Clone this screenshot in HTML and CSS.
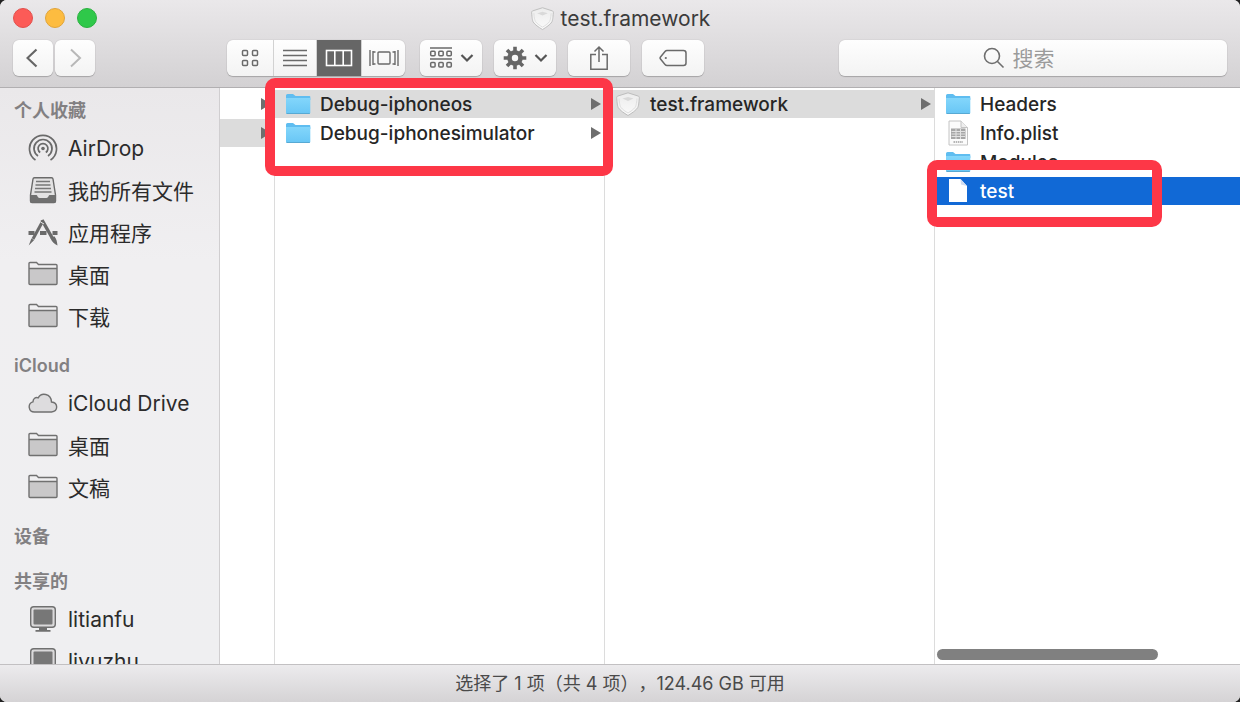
FILE: index.html
```html
<!DOCTYPE html>
<html lang="zh-CN">
<head>
    <meta charset="UTF-8">
    <meta name="viewport" content="width=device-width, initial-scale=1.0">
    <title>test.framework</title>
    <link rel="stylesheet" href="styles.css">
</head>
<body>
    <!-- shared icons -->
    <svg class="defs" aria-hidden="true">
        <defs>
            <linearGradient id="blueFill" x1="0" y1="0" x2="0" y2="1">
                <stop offset="0" stop-color="#83d6fb"/>
                <stop offset="1" stop-color="#68c6f5"/>
            </linearGradient>
            <linearGradient id="shieldFill" x1="0" y1="0" x2="0" y2="1">
                <stop offset="0" stop-color="#ececec"/>
                <stop offset="1" stop-color="#fafafa"/>
            </linearGradient>
        </defs>
        <symbol id="folder-line" viewBox="0 0 30 26">
            <path d="M1 8h28v14.500a1 1 0 0 1-1 1H2a1 1 0 0 1-1-1z" fill="#c9c8c9"/>
            <path d="M1 22.500v-20a1 1 0 0 1 1-1h6.500l2 2H28a1 1 0 0 1 1 1v18a1 1 0 0 1-1 1H2a1 1 0 0 1-1-1zM1 7.500h28" fill="none" stroke="#707070" stroke-width="1.400"/>
        </symbol>
        <symbol id="folder-blue" viewBox="0 0 26 22">
            <path d="M1 2.500A1.500 1.500 0 0 1 2.500 1H8l2.500 2h14a.8.8 0 0 1 .8.8V7H1z" fill="#5fbdf0"/>
            <path d="M1 5h24.300v14.800a1 1 0 0 1-1 1H2a1 1 0 0 1-1-1z" fill="url(#blueFill)"/>
            <path d="M1.500 20.500h23.300" stroke="#57a9d3" stroke-width="1"/>
        </symbol>
        <symbol id="shield" viewBox="0 0 26 26">
            <path d="M13 1.800L23 5c1 .3 1.500 1 1.300 2.200-.5 5.500-.6 7-1.500 9.300C21 19.500 17 22 13 24.500 9 22 5 19.500 3.200 16.500 2.300 14.200 2.200 12.700 1.700 7.200 1.500 6 2 5.300 3 5z" fill="url(#shieldFill)" stroke="#bdbdbd" stroke-width="1"/>
            <path d="M4 7.500C4.500 13 5 15 6 16.500c1.500 2 4.500 4 7 5.500 2.500-1.500 5.500-3.500 7-5.500 1-1.500 1.500-3.500 2-9" fill="none" stroke="#dedede" stroke-width="1"/>
            <path d="M7.500 7.500L13 6l5.500 1.500L13 10z" fill="#d9d9d9"/>
        </symbol>
        <symbol id="display" viewBox="0 0 30 30">
            <rect x="2.700" y="2.700" width="24.600" height="20.600" rx="3" fill="#dad9da" stroke="#707070" stroke-width="1.400"/>
            <rect x="5.500" y="5.500" width="19" height="15" rx="1" fill="#777"/>
            <path d="M11 24h8v2h3.500v1.800h-15V26H11z" fill="#707070"/>
        </symbol>
        <symbol id="chevron" viewBox="0 0 14 10">
            <path d="M1.500 2l5.500 5.500L12.500 2" fill="none" stroke="#555" stroke-width="2.200"/>
        </symbol>
    </svg>

    <div class="window">
        <header class="header">
            <div class="titlebar">
                <div class="lights">
                    <button class="light close" aria-label="关闭"></button>
                    <button class="light minimize" aria-label="最小化"></button>
                    <button class="light zoom" aria-label="缩放"></button>
                </div>
                <h1 class="title">
                    <svg class="title-icon"><use href="#shield"/></svg>
                    test.framework
                </h1>
            </div>

            <div class="toolbar">
                <div class="nav">
                    <button class="btn" aria-label="后退">
                        <svg width="14" height="20" viewBox="0 0 14 20"><path d="M10.500 1.500L1.500 10l9 8.500" fill="none" stroke="#666" stroke-width="2.200"/></svg>
                    </button>
                    <button class="btn" aria-label="前进">
                        <svg width="14" height="20" viewBox="0 0 14 20"><path d="M3 1.500L12 10l-9 8.500" fill="none" stroke="#b8b8b8" stroke-width="2"/></svg>
                    </button>
                </div>

                <div class="views">
                    <button class="view" aria-label="图标">
                        <svg width="18" height="18" viewBox="0 0 18 18" fill="none" stroke="#6a6a6a" stroke-width="1.500">
                            <rect x="1.500" y="1.500" width="5" height="5" rx="1"/><rect x="11.500" y="1.500" width="5" height="5" rx="1"/>
                            <rect x="1.500" y="11.500" width="5" height="5" rx="1"/><rect x="11.500" y="11.500" width="5" height="5" rx="1"/>
                        </svg>
                    </button>
                    <button class="view" aria-label="列表">
                        <svg width="24" height="18" viewBox="0 0 24 18"><path d="M0 1.500h24M0 6.500h24M0 11.500h24M0 16.500h24" stroke="#6a6a6a" stroke-width="1.500"/></svg>
                    </button>
                    <button class="view active" aria-label="分栏">
                        <svg width="28" height="18" viewBox="0 0 28 18" fill="none" stroke="#fff" stroke-width="1.600">
                            <rect x="1.500" y="1.500" width="25" height="15"/><path d="M9.800 1.500v15M18.200 1.500v15"/>
                        </svg>
                    </button>
                    <button class="view" aria-label="Cover Flow">
                        <svg width="30" height="18" viewBox="0 0 30 18" fill="none" stroke="#6a6a6a" stroke-width="1.400">
                            <rect x="9" y="3" width="12" height="12" rx="1"/>
                            <path d="M1 1v16M29 1v16M4 2v14M26 2v14M4 3h2.500M4 15h2.500M26 3h-2.500M26 15h-2.500"/>
                        </svg>
                    </button>
                </div>

                <div class="tools">
                    <button class="btn tool" aria-label="排列">
                        <svg width="24" height="24" viewBox="0 0 24 24" fill="none" stroke="#6a6a6a" stroke-width="1.500">
                            <path d="M1 2h22M1 13h22"/>
                            <rect x="1.700" y="5.300" width="4.400" height="4.400" rx="1"/><rect x="9.800" y="5.300" width="4.400" height="4.400" rx="1"/><rect x="17.900" y="5.300" width="4.400" height="4.400" rx="1"/>
                            <rect x="1.700" y="16.500" width="4.400" height="4.400" rx="1"/><rect x="9.800" y="16.500" width="4.400" height="4.400" rx="1"/><rect x="17.900" y="16.500" width="4.400" height="4.400" rx="1"/>
                        </svg>
                        <svg class="chevron"><use href="#chevron"/></svg>
                    </button>
                    <button class="btn tool" aria-label="操作">
                        <svg width="24" height="24" viewBox="-12 -12 24 24">
                            <circle r="5.500" fill="none" stroke="#666" stroke-width="4.600"/>
                            <g stroke="#666" stroke-width="3.600">
                                <path d="M0-7v-4.300M0 7v4.300M-7 0h-4.300M7 0h4.300"/>
                                <path d="M0-7v-4.300M0 7v4.300M-7 0h-4.300M7 0h4.300" transform="rotate(45)"/>
                            </g>
                        </svg>
                        <svg class="chevron"><use href="#chevron"/></svg>
                    </button>
                    <button class="btn tool" aria-label="共享">
                        <svg width="20" height="26" viewBox="0 0 20 26" fill="none" stroke="#6a6a6a" stroke-width="1.500">
                            <path d="M7 9.500H1.800v14.700h16.400V9.500H13M10 17V2M5.500 6.500L10 2l4.500 4.500"/>
                        </svg>
                    </button>
                    <button class="btn tool" aria-label="标记">
                        <svg width="28" height="18" viewBox="0 0 28 18" fill="none" stroke="#6a6a6a" stroke-width="1.500">
                            <path d="M8 1.500h16.500a2.500 2.500 0 0 1 2.500 2.500v10a2.500 2.500 0 0 1-2.500 2.500H8c-1 0-1.500-.4-2-1L1.500 10c-.5-.6-.5-1.400 0-2L6 2.500c.5-.6 1-1 2-1z"/>
                            <circle cx="6.800" cy="9" r="1.100" fill="#6a6a6a" stroke="none"/>
                        </svg>
                    </button>
                </div>

                <label class="search">
                    <svg width="22" height="22" viewBox="0 0 22 22" fill="none" stroke="#6e6e6e" stroke-width="1.600"><circle cx="9" cy="9" r="7.500"/><path d="M14.500 14.500l6 6"/></svg>
                    <input type="text" placeholder="搜索" aria-label="搜索">
                </label>
            </div>
        </header>

        <main class="main">
            <nav class="sidebar">
                <section class="group">
                    <h2>个人收藏</h2>
                    <a class="place" href="#">
                        <svg viewBox="0 0 30 30" fill="none" stroke="#6a6a6a" stroke-width="1.700">
                            <circle cx="15" cy="15.500" r="1.800" fill="#6a6a6a" stroke="none"/>
                            <path d="M12.200 19.500a4.900 4.900 0 1 1 5.600 0"/>
                            <path d="M10 23a9 9 0 1 1 10 0"/>
                            <path d="M7.500 27a13.500 13.500 0 1 1 15 0"/>
                        </svg>
                        AirDrop
                    </a>
                    <a class="place" href="#">
                        <svg viewBox="0 0 30 30">
                            <path d="M6.500 2.700h17a1.500 1.500 0 0 1 1.500 1.300l2.500 16v6a1.500 1.500 0 0 1-1.500 1.500H4A1.500 1.500 0 0 1 2.500 26v-6L5 4a1.500 1.500 0 0 1 1.500-1.300z" fill="#e3e2e3" stroke="#6a6a6a" stroke-width="1.400"/>
                            <path d="M8 6.500h14M7.500 10h15M7 13.500h16M6.500 17h17" stroke="#777" stroke-width="1.500"/>
                            <path d="M2.500 20h6c1 0 1 3 3 3h7c2 0 2-3 3-3h6v7.500h-25z" fill="#707070"/>
                        </svg>
                        我的所有文件
                    </a>
                    <a class="place" href="#">
                        <svg viewBox="0 0 30 30" fill="none" stroke="#6a6a6a">
                            <path d="M.5 16h6M12 16h6.500M24.500 16h5" stroke-width="4"/>
                            <path d="M14.800 4L5 22" stroke-width="3"/>
                            <path d="M14 3l10.500 18.500" stroke-width="3.400"/>
                            <path d="M12.500 5l3.500 2" stroke="#ebeaeb" stroke-width="1"/>
                            <path d="M3.400 21.500l2.800 1.500-5.500 5.500zM22.500 21.500l3.800-2.200c2.200 2.500 2.700 5.200 3.200 9.200-3-1.500-5.500-3.500-7-7z" fill="#6a6a6a" stroke="none"/>
                        </svg>
                        应用程序
                    </a>
                    <a class="place" href="#"><svg viewBox="0 0 30 26"><use href="#folder-line"/></svg>桌面</a>
                    <a class="place" href="#"><svg viewBox="0 0 30 26"><use href="#folder-line"/></svg>下载</a>
                </section>

                <section class="group">
                    <h2>iCloud</h2>
                    <a class="place" href="#">
                        <svg viewBox="0 0 30 30"><path d="M6.500 24A5.200 5.200 0 0 1 5 13.800c0-3.300 2.500-4.800 5.200-4 3-5.500 12.800-4.600 13.300 4.200 7 .8 6.800 9.500 0 10z" fill="#dddcde" stroke="#707070" stroke-width="1.400"/></svg>
                        iCloud Drive
                    </a>
                    <a class="place" href="#"><svg viewBox="0 0 30 26"><use href="#folder-line"/></svg>桌面</a>
                    <a class="place" href="#"><svg viewBox="0 0 30 26"><use href="#folder-line"/></svg>文稿</a>
                </section>

                <section class="group">
                    <h2>设备</h2>
                </section>

                <section class="group">
                    <h2>共享的</h2>
                    <a class="place" href="#"><svg><use href="#display"/></svg>litianfu</a>
                    <a class="place" href="#"><svg><use href="#display"/></svg>liyuzhu</a>
                </section>
            </nav>

            <div class="browser">
                <ul class="column narrow">
                    <li><a class="file parent" href="#" aria-label="文件夹"></a></li>
                    <li><a class="file parent selected" href="#" aria-label="文件夹"></a></li>
                </ul>
                <ul class="column">
                    <li><a class="file parent selected" href="#"><svg><use href="#folder-blue"/></svg>Debug-iphoneos</a></li>
                    <li><a class="file parent" href="#"><svg><use href="#folder-blue"/></svg>Debug-iphonesimulator</a></li>
                </ul>
                <ul class="column">
                    <li><a class="file parent selected" href="#"><svg><use href="#shield"/></svg>test.framework</a></li>
                </ul>
                <ul class="column last">
                    <li><a class="file" href="#"><svg><use href="#folder-blue"/></svg>Headers</a></li>
                    <li>
                        <a class="file" href="#">
                            <svg viewBox="0 0 26 26">
                                <path d="M4 1h12l6.500 6.500V25H4z" fill="#fbfbfb" stroke="#c4c4c4" stroke-width="1"/>
                                <path d="M16 1v6.500h6.500" fill="#eee" stroke="#c4c4c4" stroke-width="1"/>
                                <rect x="6" y="8.500" width="14.500" height="10.500" fill="#a6a6a6"/>
                                <path d="M6.500 11.500h13.500M6.500 14h13.500M6.500 16.500h13.500M11 9v10M15.500 9v10" stroke="#e2e2e2" stroke-width="1"/>
                                <path d="M8.500 22h9.500" stroke="#b5b5b5" stroke-width="2" stroke-dasharray="1.500 .7"/>
                            </svg>
                            Info.plist
                        </a>
                    </li>
                    <li><a class="file" href="#"><svg><use href="#folder-blue"/></svg>Modules</a></li>
                    <li>
                        <a class="file current" href="#">
                            <svg viewBox="0 0 26 26"><path d="M4 1h11.500l6.500 7v16H4z" fill="#fff"/><path d="M15.500 1l6.500 7-6-1.500z" fill="#cfdcf0"/></svg>
                            test
                        </a>
                    </li>
                </ul>
                <div class="scrollbar"></div>
                <div class="mark mark-builds"></div>
                <div class="mark mark-binary"></div>
            </div>
        </main>

        <footer class="status">选择了 1 项（共 4 项），124.46 GB 可用</footer>
    </div>
</body>
</html>
```

FILE: styles.css
```css
* {
    box-sizing: border-box;
}

body {
    margin: 0;
    background: #222;
    font-family: Inter, "Noto Sans CJK SC", sans-serif;
    color: #2b2b2b;
}

h1, h2, ul {
    margin: 0;
    padding: 0;
}

a {
    color: inherit;
    text-decoration: none;
}

button {
    padding: 0;
    border: none;
    font: inherit;
}

.defs {
    position: absolute;
    width: 0;
    height: 0;
}

.window {
    display: flex;
    flex-direction: column;
    height: 100vh;
    border-radius: 7px;
    overflow: hidden;
    background: white;
}

/* Title bar and toolbar */
.header {
    padding: 0 13px 11px;
    background: linear-gradient(#eae8ea, #d3d1d3);
    border-bottom: 1px solid #b1afb1;
}

.titlebar {
    display: grid;
    grid-template-columns: 1fr auto 1fr;
    align-items: center;
    height: 36px;
    margin-bottom: 4px;
}

.lights {
    display: flex;
    gap: 12px;
}

.light {
    width: 20px;
    height: 20px;
    border-radius: 50%;
}

.close {
    background: #fc5b57;
    border: 1px solid #e2504c;
}

.minimize {
    background: #fdbc40;
    border: 1px solid #e0a43a;
}

.zoom {
    background: #2fc84a;
    border: 1px solid #2bb140;
}

.title {
    display: flex;
    align-items: center;
    gap: 6px;
    font-size: 21px;
    font-weight: 400;
    color: #3b3b3b;
}

.title-icon {
    width: 25px;
    height: 25px;
}

.toolbar {
    display: flex;
    align-items: center;
}

.nav {
    display: flex;
    gap: 2px;
    margin-right: 132px;
}

.btn,
.views,
.search {
    height: 36px;
    background: linear-gradient(#fefefe, #f3f3f3);
    border-radius: 6px;
    box-shadow: 0 0 1px rgba(0,0,0,0.3), 0 1px 1px rgba(0,0,0,0.2);
}

.btn {
    display: flex;
    align-items: center;
    justify-content: center;
    width: 40px;
}

.views {
    display: grid;
    grid-template-columns: 47px 43px 45px 1fr;
    width: 178px;
    margin-right: 15px;
    overflow: hidden;
}

.view {
    display: flex;
    align-items: center;
    justify-content: center;
    background: none;
    border-right: 1px solid #d2d2d2;
}

.view:last-child {
    border-right: none;
}

.view.active {
    background: #666;
}

.tools {
    display: flex;
    gap: 12px;
}

.tool {
    gap: 7px;
    width: 62px;
}

.chevron {
    width: 14px;
    height: 10px;
}

.search {
    display: flex;
    align-items: center;
    gap: 8px;
    width: 32%;
    margin-left: auto;
    padding-left: 144px;
}

.search input {
    flex: 1;
    min-width: 0;
    padding: 0;
    border: none;
    outline: none;
    background: none;
    font: inherit;
    font-size: 21px;
}

.search input::placeholder {
    color: #9b9b9b;
}

/* Content */
.main {
    display: flex;
    flex: 1;
    min-height: 0;
}

.sidebar {
    flex: none;
    width: 220px;
    padding-top: 6px;
    overflow: hidden;
    background: linear-gradient(#eae8ea, #f0eff1 30%, #efeff1);
    border-right: 1px solid #d0ced0;
}

.group {
    margin-bottom: 12px;
}

.group h2 {
    padding-left: 14px;
    font-size: 18px;
    font-weight: 600;
    line-height: 33px;
    color: #828082;
}

.place {
    display: flex;
    align-items: center;
    gap: 10px;
    height: 42px;
    padding-left: 28px;
    font-size: 21px;
    white-space: nowrap;
}

.place svg {
    width: 30px;
    height: 30px;
}

.browser {
    position: relative;
    display: flex;
    flex: 1;
    min-width: 0;
}

.column {
    display: flex;
    flex: none;
    flex-direction: column;
    gap: 1px;
    width: 330px;
    padding-top: 2px;
    list-style: none;
    border-right: 1px solid #dcdcdc;
}

.column.narrow {
    width: 55px;
}

.column.last {
    flex: 1;
    min-width: 0;
    border-right: none;
}

.file {
    display: flex;
    align-items: center;
    gap: 9px;
    height: 28px;
    padding: 0 3px 0 10px;
    font-size: 19px;
    font-weight: 500;
    color: #262626;
    white-space: nowrap;
}

.file svg {
    flex: none;
    width: 26px;
    height: 26px;
}

.parent::after {
    content: "";
    margin-left: auto;
    border: 6px solid transparent;
    border-left: 10px solid #6e6e6e;
    border-right: none;
}

.selected {
    background: #dcdcdc;
}

.current {
    background: #1169d6;
    color: white;
}

.scrollbar {
    position: absolute;
    left: 717px;
    bottom: 4px;
    width: 221px;
    height: 11px;
    border-radius: 6px;
    background: #808080;
}

/* Red highlight boxes */
.mark {
    position: absolute;
    border: 10px solid #fd3747;
    border-radius: 10px;
    pointer-events: none;
}

.mark-builds {
    top: -10px;
    left: 45px;
    width: 348px;
    height: 98px;
}

.mark-binary {
    top: 72px;
    left: 707px;
    width: 235px;
    height: 67px;
}

.status {
    flex: none;
    height: 38px;
    border-top: 1px solid #c2c0c2;
    background: linear-gradient(#ecebed, #d5d3d5);
    font-size: 18px;
    line-height: 37px;
    text-align: center;
    text-spacing-trim: space-all;
    color: #4a4a4a;
}
```
